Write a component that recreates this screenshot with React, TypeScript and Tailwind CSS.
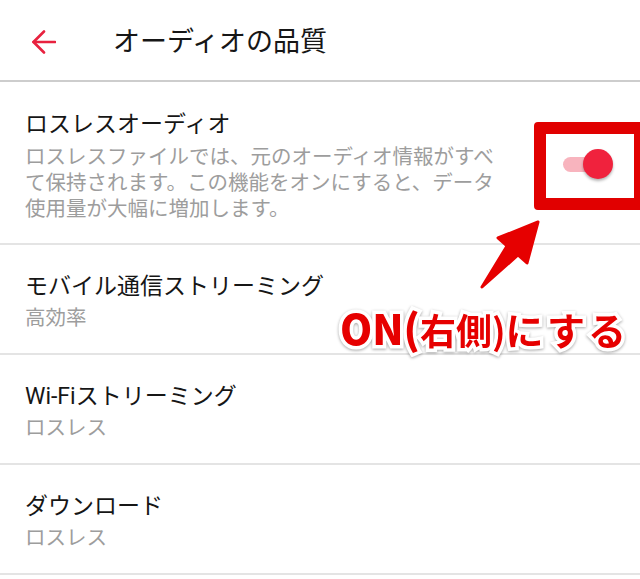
import React from 'react';

const font = "font-['Roboto','Noto_Sans_CJK_JP',sans-serif]";

const rows = [
  { title: 'モバイル通信ストリーミング', sub: '高効率' },
  { title: 'Wi-Fiストリーミング', sub: 'ロスレス' },
  { title: 'ダウンロード', sub: 'ロスレス' },
];

export default function App() {
  return (
    <div className={`relative h-[579px] w-[640px] overflow-hidden bg-white ${font}`}>
      {/* ヘッダー */}
      <div className="flex h-[82px] items-center border-b-2 border-[#cdcdcd] pl-[32px] pt-[3px]">
        <svg width="24" height="24" viewBox="0 0 24 24" fill="none" stroke="#e8223f" strokeWidth="2.6" strokeLinecap="round" strokeLinejoin="round">
          <path d="M23 12H1.5" />
          <path d="M12 1.5L1.5 12L12 22.5" />
        </svg>
        <h1 className="ml-[57px] text-[27px] leading-[32px] font-normal text-[#161616]">オーディオの品質</h1>
      </div>

      {/* ロスレス */}
      <div className="flex items-center border-b-2 border-[#e4e4e4] pt-[28px] pb-[21px] pl-[25px]">
        <div className="w-[482px]">
          <div className="text-[23px] leading-[30px] text-[#161616]">ロスレスオーディオ</div>
          <p className="mt-[4px] text-[20.5px] leading-[26px] text-[#9d9d9d]">
            ロスレスファイルでは、元のオーディオ情報がすべて保持されます。この機能をオンにすると、データ使用量が大幅に増加します。
          </p>
        </div>
        <div className="relative ml-[56px] mt-[-4px] h-[15px] w-[38px] rounded-full bg-[#f8b4be]">
          <span className="absolute right-[-12px] top-1/2 h-[30px] w-[30px] -translate-y-1/2 rounded-full bg-[#f0223d] shadow-[0_2px_3px_rgba(0,0,0,0.3)]" />
        </div>
      </div>

      {rows.map((r) => (
        <div key={r.title} className="border-b-2 border-[#e4e4e4] pt-[27px] pb-[22px] pl-[25px]">
          <div className="text-[23px] leading-[30px] text-[#161616]">{r.title}</div>
          <div className="mt-[3px] text-[20.5px] leading-[26px] text-[#9d9d9d]">{r.sub}</div>
        </div>
      ))}

      {/* 注釈 */}
      <div className="absolute left-[534px] top-[122px] h-[88px] w-[112px] rounded-[4px] border-[12px] border-[#e10000]" />
      <svg className="absolute left-0 top-0" width="640" height="579" viewBox="0 0 640 579">
        <polygon
          points="538,222 498,238 507,246 482,287 518,255 527,263"
          fill="#e60000"
          stroke="#e60000"
          strokeWidth="3"
          strokeLinejoin="round"
        />
      </svg>
      <div className="absolute left-[340px] top-[306px] flex items-baseline font-['Noto_Sans_CJK_JP',sans-serif] leading-[42px] font-bold whitespace-nowrap text-[#e60000] [-webkit-text-stroke:7px_#fff] [paint-order:stroke_fill] drop-shadow-[0_1px_1.5px_rgba(0,0,0,0.35)]">
        <span className="text-[41px] font-black">ON(</span>
        <span className="text-[36px]">右側)</span>
        <span className="text-[38px] tracking-[3px]">にする</span>
      </div>
    </div>
  );
}
